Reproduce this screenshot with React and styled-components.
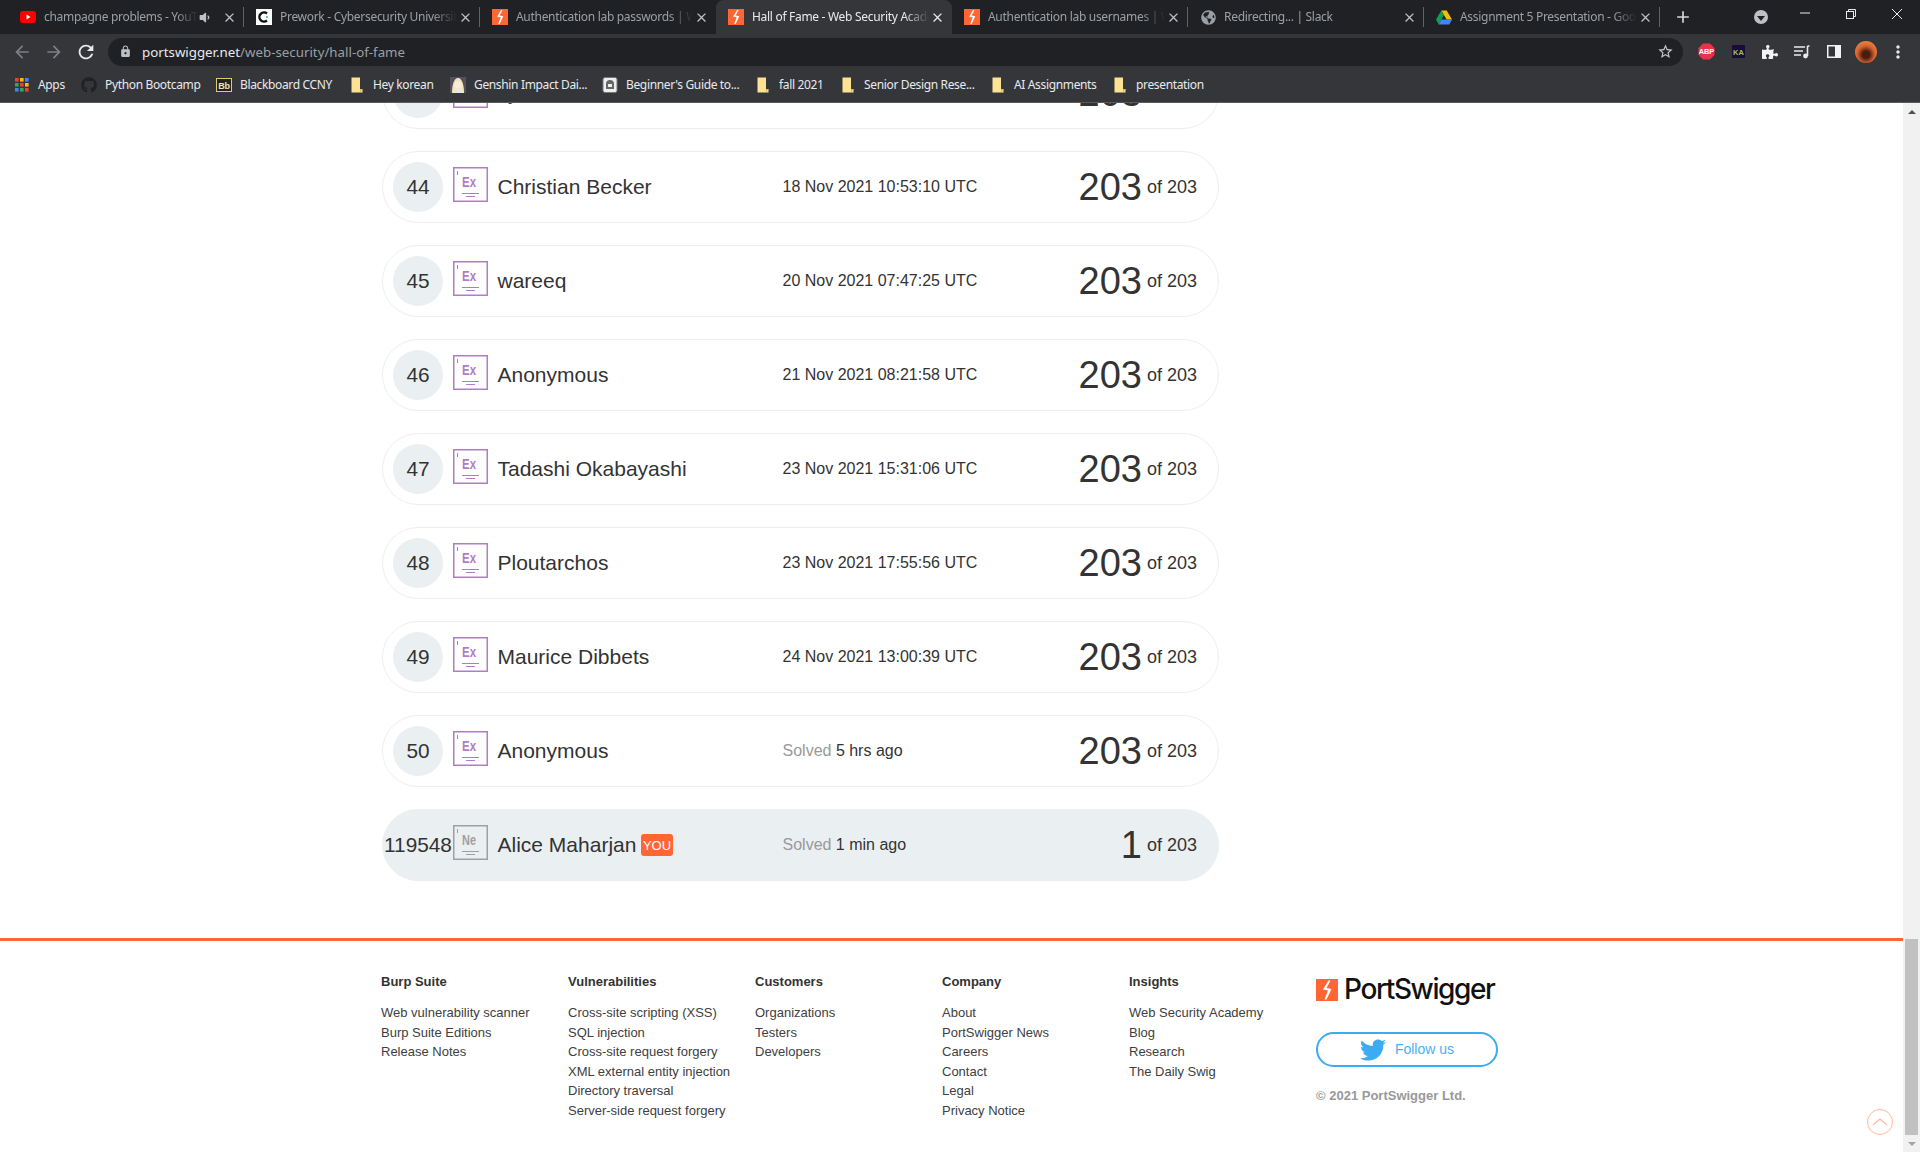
import React from 'react'
import styled, { createGlobalStyle } from 'styled-components'
import { FaTwitter, FaGithub, FaPuzzlePiece, FaGlobeAmericas, FaVolumeDown } from 'react-icons/fa'
import { MdLock, MdArrowBack, MdArrowForward, MdRefresh, MdClose, MdAdd, MdStarBorder, MdMoreVert } from 'react-icons/md'

const GlobalStyle = createGlobalStyle`
  html, body { margin: 0; padding: 0; height: 100%; overflow: hidden; background: #fff; }
  body { font-family: "Liberation Sans", Arial, sans-serif; color: #333; }
  * { box-sizing: border-box; }
`

const Page = styled.div`
  width: 1920px;
  height: 1152px;
  display: flex;
  flex-direction: column;
  overflow: hidden;
`

/* browser chrome */
const TabStrip = styled.div`
  height: 34px;
  background: #202124;
  display: flex;
  align-items: stretch;
  padding-left: 8px;
  font-family: "Noto Sans", "Open Sans", sans-serif;
`
const Tab = styled.div`
  position: relative;
  width: 236px;
  flex: none;
  display: flex;
  align-items: center;
  padding: 0 7px 0 12px;
  background: ${p => (p.$active ? '#35363a' : 'transparent')};
  border-radius: ${p => (p.$active ? '8px 8px 0 0' : '0')};
  color: ${p => (p.$active ? '#e8eaed' : '#9aa0a6')};
  font-size: 12px;
  letter-spacing: -0.3px;
  &::after {
    content: '';
    display: ${p => (p.$sep ? 'block' : 'none')};
    position: absolute;
    right: 0;
    top: 7px;
    width: 1px;
    height: 20px;
    background: #5f6368;
  }
`
const TabIcon = styled.span`
  width: 16px;
  height: 16px;
  flex: none;
  display: flex;
  align-items: center;
  justify-content: center;
`
const TabTitle = styled.span`
  flex: 1;
  min-width: 0;
  margin: -1px 0 0 8px;
  white-space: nowrap;
  overflow: hidden;
  -webkit-mask-image: linear-gradient(to right, #000 86%, transparent 100%);
  mask-image: linear-gradient(to right, #000 86%, transparent 100%);
`
const TabAudio = styled.span`
  flex: none;
  width: 23px;
  display: flex;
  color: #bdc1c6;
  font-size: 13px;
`
const TabClose = styled.span`
  flex: none;
  width: 16px;
  display: flex;
  justify-content: center;
  color: ${p => (p.$active ? '#e8eaed' : '#bdc1c6')};
  font-size: 15px;
`
const NewTab = styled.div`
  width: 30px;
  margin-left: 8px;
  display: flex;
  align-items: center;
  justify-content: center;
  color: #d5d7da;
  font-size: 20px;
`
const TabSearch = styled.div`
  width: 14px;
  height: 14px;
  margin-left: auto;
  margin-right: 14px;
  align-self: center;
  border-radius: 50%;
  background: #bdc1c6;
  display: flex;
  align-items: center;
  justify-content: center;
  &::after {
    content: '';
    margin-top: 2px;
    border-left: 4px solid transparent;
    border-right: 4px solid transparent;
    border-top: 5px solid #202124;
  }
`
const WindowButton = styled.div`
  width: 46px;
  height: 28px;
  display: flex;
  align-items: center;
  justify-content: center;
  color: #e8eaed;
`
const Toolbar = styled.div`
  height: 35px;
  background: #35363a;
  display: flex;
  align-items: center;
  padding: 0 6px;
`
const NavButton = styled.div`
  width: 32px;
  height: 28px;
  flex: none;
  display: flex;
  align-items: center;
  justify-content: center;
  color: ${p => p.$color || '#9aa0a6'};
  font-size: ${p => p.$size || 20}px;
`
const Omnibox = styled.div`
  flex: 1;
  height: 28px;
  margin: 0 7px 0 6px;
  border-radius: 14px;
  background: #202124;
  display: flex;
  align-items: center;
  padding: 0 9px 0 11px;
  font-family: "Noto Sans", "Open Sans", sans-serif;
  font-size: 13.3px;
  color: #9aa0a6;
`
const UrlHost = styled.span`
  color: #e8eaed;
`
const Url = styled.div`
  flex: 1;
  margin-left: 10px;
`
const Avatar = styled.span`
  width: 22px;
  height: 22px;
  border-radius: 50%;
  background: radial-gradient(circle at 50% 62%, #4a1c10 0 20%, #d9622f 50%, #f0a050 100%);
`
const Bookmarks = styled.div`
  height: 34px;
  background: #35363a;
  border-bottom: 1px solid #5a5b5f;
  display: flex;
  align-items: center;
  padding: 0 0 1px 14px;
  font-family: "Noto Sans", "Open Sans", sans-serif;
  font-size: 12px;
  letter-spacing: -0.35px;
  color: #e8eaed;
`
const Bookmark = styled.div`
  flex: none;
  width: ${p => p.$w}px;
  display: flex;
  align-items: center;
  gap: 8px;
  white-space: nowrap;
`
const BookmarkIcon = styled.span`
  width: 16px;
  height: 16px;
  flex: none;
  display: flex;
  align-items: center;
  justify-content: center;
`
const BookmarkLabel = styled.span`
  margin-top: -2px;
`

/* page body */
const Body = styled.div`
  flex: 1;
  min-height: 0;
  display: flex;
`
const Scroller = styled.div`
  position: relative;
  flex: 1;
  min-width: 0;
  overflow: hidden;
  background: #fff;
`
const Board = styled.div`
  width: 837px;
  margin: -46px 0 57px 382px;
  display: flex;
  flex-direction: column;
  gap: 22px;
`
const Row = styled.div`
  height: 72px;
  display: flex;
  align-items: center;
  padding: 0 21px 0 10px;
  border-radius: 36px;
  border: 1.5px solid ${p => (p.$me ? '#eaeff2' : '#eceff1')};
  background: ${p => (p.$me ? '#eaeff2' : '#fff')};
`
const Rank = styled.div`
  width: 50px;
  height: 50px;
  flex: none;
  border-radius: 50%;
  background: #eaeff2;
  display: flex;
  align-items: center;
  justify-content: center;
  font-size: 20.8px;
  color: #333;
  white-space: nowrap;
`
const Element = styled.svg`
  width: 35px;
  height: 35px;
  flex: none;
  margin: -5px 0 0 10px;
`
const Name = styled.div`
  margin-left: 9.5px;
  width: 285px;
  flex: none;
  display: flex;
  align-items: center;
  gap: 5px;
  font-size: 21px;
  color: #333;
  white-space: nowrap;
`
const You = styled.span`
  background: #ff6633;
  color: #fff;
  border-radius: 3px;
  padding: 0 1.5px;
  height: 22px;
  line-height: 23px;
  font-size: 13px;
`
const When = styled.div`
  font-size: 16px;
  color: #333;
  white-space: nowrap;
`
const Faded = styled.span`
  color: #999;
`
const Score = styled.div`
  margin-left: auto;
  display: flex;
  align-items: center;
  gap: 5px;
  font-size: 18px;
  white-space: nowrap;
`
const ScoreBig = styled.span`
  font-size: 38px;
  line-height: 44px;
`
const Footer = styled.footer`
  border-top: 3px solid #ff6633;
  padding: 31px 0 0 381px;
  display: flex;
  font-size: 13px;
  line-height: 19.5px;
`
const FooterCol = styled.div`
  width: 187px;
  flex: none;
`
const FooterHead = styled.div`
  font-weight: 700;
  color: #333;
  margin-bottom: 11.5px;
`
const FooterLink = styled.div`
  color: #404040;
  white-space: nowrap;
`
const Brand = styled.div`
  width: 182px;
  flex: none;
  display: flex;
  flex-direction: column;
  align-items: flex-start;
`
const Logo = styled.div`
  display: flex;
  align-items: center;
  gap: 6px;
  height: 30px;
  margin-top: 3px;
  font-family: Inter, sans-serif;
  font-weight: 500;
  font-size: 28px;
  letter-spacing: -1.4px;
  color: #111;
  white-space: nowrap;
`
const Follow = styled.div`
  width: 182px;
  height: 35px;
  margin-top: 27px;
  border: 2px solid #3babf2;
  border-radius: 18px;
  display: flex;
  align-items: center;
  justify-content: center;
  gap: 9px;
  color: #4bb0f2;
  font-size: 14px;
  svg { font-size: 26px; color: #3babf2; }
`
const Copyright = styled.div`
  margin-top: 19px;
  font-weight: 700;
  color: #999;
`
const BackToTop = styled.div`
  position: absolute;
  right: 10px;
  bottom: 17px;
  width: 26px;
  height: 26px;
  border-radius: 50%;
  border: 1.5px solid #ffb899;
  display: flex;
  align-items: center;
  justify-content: center;
`
const Scrollbar = styled.div`
  width: 17px;
  flex: none;
  background: #f1f1f1;
  display: flex;
  flex-direction: column;
`
const ScrollButton = styled.div`
  height: 17px;
  display: flex;
  align-items: center;
  justify-content: center;
  &::after {
    content: '';
    border-left: 4px solid transparent;
    border-right: 4px solid transparent;
    border-${p => (p.$up ? 'bottom' : 'top')}: 4px solid ${p => (p.$up ? '#505050' : '#a3a3a3')};
  }
`
const ScrollTrack = styled.div`
  flex: 1;
  display: flex;
  flex-direction: column;
  justify-content: flex-end;
  padding: 0 2px;
`
const ScrollThumb = styled.div`
  height: 196px;
  background: #c1c1c1;
`

const Bolt = ({ size }) => (
  <svg width={size} height={size} viewBox="0 0 22 22">
    <rect width="22" height="22" fill="#ff6633" />
    <path d="M12.5 1.5 L7 10.5 L12 11.5 L8.5 20.5 L10.5 20.5 L15.5 10 L10.5 9 L14.5 1.5 Z" fill="#fff" />
  </svg>
)
const YouTube = () => (
  <svg width="16" height="16" viewBox="0 0 16 16">
    <rect y="2" width="16" height="12" rx="3" fill="#f00" />
    <path d="M6.5 5.5 L10.5 8 L6.5 10.5 Z" fill="#fff" />
  </svg>
)
const Prework = () => (
  <svg width="16" height="16" viewBox="0 0 16 16">
    <rect width="16" height="16" fill="#fff" />
    <path d="M11 4.5 A4.6 4.6 0 1 0 11 11.5" fill="none" stroke="#111" strokeWidth="2.4" />
    <circle cx="11" cy="8" r="1.1" fill="#3ecf8e" />
  </svg>
)
const Drive = () => (
  <svg width="16" height="15" viewBox="0 0 16 15">
    <path d="M5.3 0.5 H10.7 L16 9.5 H10.6 Z" fill="#fbbc04" />
    <path d="M5.3 0.5 L0 9.5 L2.7 14.5 L8 5 Z" fill="#0f9d58" />
    <path d="M2.7 14.5 H13.3 L16 9.5 H5.4 Z" fill="#4285f4" />
  </svg>
)
const Folder = () => (
  <svg width="12" height="16" viewBox="0 0 12 16">
    <path d="M0.5 0.5 H9 V12 H11.5 V15.5 H0.5 Z" fill="#fde293" />
    <path d="M9 12 L11.5 12 L9 15.5 Z" fill="#e0b94e" />
  </svg>
)
const AppsGrid = () => (
  <svg width="14" height="14" viewBox="0 0 14 14">
    {['#ea4335', '#fbbc04', '#4285f4', '#34a853', '#ea4335', '#fbbc04', '#4285f4', '#34a853', '#ea4335'].map((c, i) => (
      <rect key={i} x={(i % 3) * 5} y={Math.floor(i / 3) * 5} width="3.6" height="3.6" fill={c} />
    ))}
  </svg>
)
const BbIcon = () => (
  <svg width="16" height="16" viewBox="0 0 16 16">
    <rect x="0.5" y="1.5" width="15" height="13" fill="#222" stroke="#e8c66a" />
    <text x="8" y="11.5" textAnchor="middle" fontSize="9" fontWeight="700" fill="#f0e2b6" fontFamily="Liberation Sans">Bb</text>
  </svg>
)
const GenshinIcon = () => (
  <svg width="16" height="16" viewBox="0 0 16 16">
    <rect width="16" height="16" fill="#55505f" />
    <path d="M2 16 C2 8 4 1 8 1 C12 1 14 8 14 16 Z" fill="#f3e6b8" />
    <circle cx="8" cy="8" r="3.4" fill="#fbeadf" />
    <rect x="5" y="12" width="6" height="4" fill="#e9e3f2" />
  </svg>
)
const GuideIcon = () => (
  <svg width="16" height="16" viewBox="0 0 16 16">
    <rect x="1" y="0.5" width="14" height="15" rx="2" fill="#eee" stroke="#777" />
    <path d="M4 12 V7 A4 4 0 0 1 12 7 V12 Z" fill="#666" />
    <rect x="6" y="7" width="4" height="3" fill="#eee" />
  </svg>
)
const AbpIcon = () => (
  <svg width="17" height="17" viewBox="0 0 17 17">
    <path d="M5 0.5 H12 L16.5 5 V12 L12 16.5 H5 L0.5 12 V5 Z" fill="#e8334a" />
    <text x="8.5" y="11.3" textAnchor="middle" fontSize="7.4" fontWeight="700" fill="#fff" fontFamily="Liberation Sans">ABP</text>
  </svg>
)
const KaIcon = () => (
  <svg width="13" height="13" viewBox="0 0 13 13">
    <rect width="13" height="13" fill="#1b0a3a" />
    <text x="6.5" y="9.5" textAnchor="middle" fontSize="7.5" fontWeight="700" fill="#9ac94a" fontFamily="Liberation Sans">KA</text>
  </svg>
)
const MediaIcon = () => (
  <svg width="16" height="14" viewBox="0 0 16 14">
    <path d="M0 2 H11 M0 6 H9 M0 10 H7" stroke="#e8eaed" strokeWidth="1.5" />
    <path d="M13.5 1 H15.5 M13.5 1 V11" stroke="#e8eaed" strokeWidth="1.6" fill="none" />
    <circle cx="11.5" cy="11" r="2.4" fill="#e8eaed" />
  </svg>
)
const PanelIcon = () => (
  <svg width="14" height="13" viewBox="0 0 14 13">
    <rect width="14" height="13" fill="#f1f3f4" />
    <rect x="1.5" y="1.5" width="6.5" height="10" fill="#35363a" />
  </svg>
)

const ElementBadge = ({ symbol, color }) => (
  <Element viewBox="0 0 35 35">
    <rect x="0.75" y="0.75" width="33.5" height="33.5" fill="none" stroke={color} strokeWidth="1.5" />
    <rect x="4" y="4" width="1" height="4" fill={color} />
    <text x="9" y="20" fontFamily="Liberation Sans" fontWeight="700" fontSize="14" textLength="14" lengthAdjust="spacingAndGlyphs" fill={color}>{symbol}</text>
    <rect x="9" y="26" width="17" height="1" fill={color} />
    <rect x="13" y="29" width="9" height="1" fill={color} />
  </Element>
)

const tabs = [
  { title: 'champagne problems - YouTube', icon: <YouTube />, audio: true, sep: true },
  { title: 'Prework - Cybersecurity University', icon: <Prework />, sep: true },
  { title: 'Authentication lab passwords | Web Security', icon: <Bolt size={16} /> },
  { title: 'Hall of Fame - Web Security Academy', icon: <Bolt size={16} />, active: true },
  { title: 'Authentication lab usernames | Web Security', icon: <Bolt size={16} />, sep: true },
  { title: 'Redirecting... | Slack', icon: <FaGlobeAmericas size={15} color="#9aa0a6" />, sep: true },
  { title: 'Assignment 5 Presentation - Google Slides', icon: <Drive />, sep: true },
]

const bookmarks = [
  { label: 'Apps', w: 67, icon: <AppsGrid /> },
  { label: 'Python Bootcamp', w: 135, icon: <FaGithub size={16} color="#202124" /> },
  { label: 'Blackboard CCNY', w: 133, icon: <BbIcon /> },
  { label: 'Hey korean', w: 101, icon: <Folder /> },
  { label: 'Genshin Impact Dai...', w: 152, icon: <GenshinIcon /> },
  { label: "Beginner's Guide to...", w: 153, icon: <GuideIcon /> },
  { label: 'fall 2021', w: 85, icon: <Folder /> },
  { label: 'Senior Design Rese...', w: 150, icon: <Folder /> },
  { label: 'AI Assignments', w: 122, icon: <Folder /> },
  { label: 'presentation', w: 100, icon: <Folder /> },
]

const rows = [
  { rank: 43, name: 'Jyoti', when: '18 Nov 2021 09:12:44 UTC' },
  { rank: 44, name: 'Christian Becker', when: '18 Nov 2021 10:53:10 UTC' },
  { rank: 45, name: 'wareeq', when: '20 Nov 2021 07:47:25 UTC' },
  { rank: 46, name: 'Anonymous', when: '21 Nov 2021 08:21:58 UTC' },
  { rank: 47, name: 'Tadashi Okabayashi', when: '23 Nov 2021 15:31:06 UTC' },
  { rank: 48, name: 'Ploutarchos', when: '23 Nov 2021 17:55:56 UTC' },
  { rank: 49, name: 'Maurice Dibbets', when: '24 Nov 2021 13:00:39 UTC' },
  { rank: 50, name: 'Anonymous', ago: '5 hrs ago' },
]

const footerCols = [
  { head: 'Burp Suite', links: ['Web vulnerability scanner', 'Burp Suite Editions', 'Release Notes'] },
  { head: 'Vulnerabilities', links: ['Cross-site scripting (XSS)', 'SQL injection', 'Cross-site request forgery', 'XML external entity injection', 'Directory traversal', 'Server-side request forgery'] },
  { head: 'Customers', links: ['Organizations', 'Testers', 'Developers'] },
  { head: 'Company', links: ['About', 'PortSwigger News', 'Careers', 'Contact', 'Legal', 'Privacy Notice'] },
  { head: 'Insights', links: ['Web Security Academy', 'Blog', 'Research', 'The Daily Swig'] },
]

const App = () => (
  <Page>
    <GlobalStyle />
    <TabStrip>
      {tabs.map(t => (
        <Tab key={t.title} $active={t.active} $sep={t.sep}>
          <TabIcon>{t.icon}</TabIcon>
          <TabTitle>{t.title}</TabTitle>
          {t.audio && <TabAudio><FaVolumeDown /></TabAudio>}
          <TabClose $active={t.active}><MdClose /></TabClose>
        </Tab>
      ))}
      <NewTab><MdAdd /></NewTab>
      <TabSearch />
      <WindowButton>
        <svg width="12" height="12" viewBox="0 0 12 12"><path d="M1 5 H11" stroke="currentColor" /></svg>
      </WindowButton>
      <WindowButton>
        <svg width="12" height="12" viewBox="0 0 12 12" fill="none" stroke="currentColor"><rect x="1.5" y="3.5" width="7" height="7" /><path d="M3.5 3.5 V1.5 H10.5 V8.5 H8.5" /></svg>
      </WindowButton>
      <WindowButton>
        <svg width="12" height="12" viewBox="0 0 12 12" stroke="currentColor"><path d="M1 1 L11 11 M11 1 L1 11" /></svg>
      </WindowButton>
    </TabStrip>
    <Toolbar>
      <NavButton $color="#7c7f84"><MdArrowBack /></NavButton>
      <NavButton $color="#7c7f84"><MdArrowForward /></NavButton>
      <NavButton $color="#e8eaed" $size={22}><MdRefresh /></NavButton>
      <Omnibox>
        <MdLock size={13} color="#bdc1c6" />
        <Url><UrlHost>portswigger.net</UrlHost>/web-security/hall-of-fame</Url>
        <MdStarBorder size={17} color="#c7c9cc" />
      </Omnibox>
      <NavButton><AbpIcon /></NavButton>
      <NavButton><KaIcon /></NavButton>
      <NavButton $color="#f1f3f4" $size={16}><FaPuzzlePiece /></NavButton>
      <NavButton><MediaIcon /></NavButton>
      <NavButton><PanelIcon /></NavButton>
      <NavButton><Avatar /></NavButton>
      <NavButton $color="#e8eaed" $size={20}><MdMoreVert /></NavButton>
    </Toolbar>
    <Bookmarks>
      {bookmarks.map(b => (
        <Bookmark key={b.label} $w={b.w}>
          <BookmarkIcon>{b.icon}</BookmarkIcon>
          <BookmarkLabel>{b.label}</BookmarkLabel>
        </Bookmark>
      ))}
    </Bookmarks>
    <Body>
      <Scroller>
        <Board>
          {rows.map(r => (
            <Row key={r.rank}>
              <Rank>{r.rank}</Rank>
              <ElementBadge symbol="Ex" color="#b07cc6" />
              <Name>{r.name}</Name>
              <When>{r.ago ? <><Faded>Solved</Faded> {r.ago}</> : r.when}</When>
              <Score><ScoreBig>203</ScoreBig> of 203</Score>
            </Row>
          ))}
          <Row $me>
            <Rank>119548</Rank>
            <ElementBadge symbol="Ne" color="#a0a0a0" />
            <Name>Alice Maharjan <You>YOU</You></Name>
            <When><Faded>Solved</Faded> 1 min ago</When>
            <Score><ScoreBig>1</ScoreBig> of 203</Score>
          </Row>
        </Board>
        <Footer>
          {footerCols.map(c => (
            <FooterCol key={c.head}>
              <FooterHead>{c.head}</FooterHead>
              {c.links.map(l => <FooterLink key={l}>{l}</FooterLink>)}
            </FooterCol>
          ))}
          <Brand>
            <Logo><Bolt size={22} />PortSwigger</Logo>
            <Follow><FaTwitter />Follow us</Follow>
            <Copyright>© 2021 PortSwigger Ltd.</Copyright>
          </Brand>
        </Footer>
        <BackToTop>
          <svg width="16" height="10" viewBox="0 0 16 10" fill="none" stroke="#ffb899" strokeWidth="1.3"><path d="M1 8 L8 2 L15 8" /></svg>
        </BackToTop>
      </Scroller>
      <Scrollbar>
        <ScrollButton $up />
        <ScrollTrack><ScrollThumb /></ScrollTrack>
        <ScrollButton />
      </Scrollbar>
    </Body>
  </Page>
)

export default App
